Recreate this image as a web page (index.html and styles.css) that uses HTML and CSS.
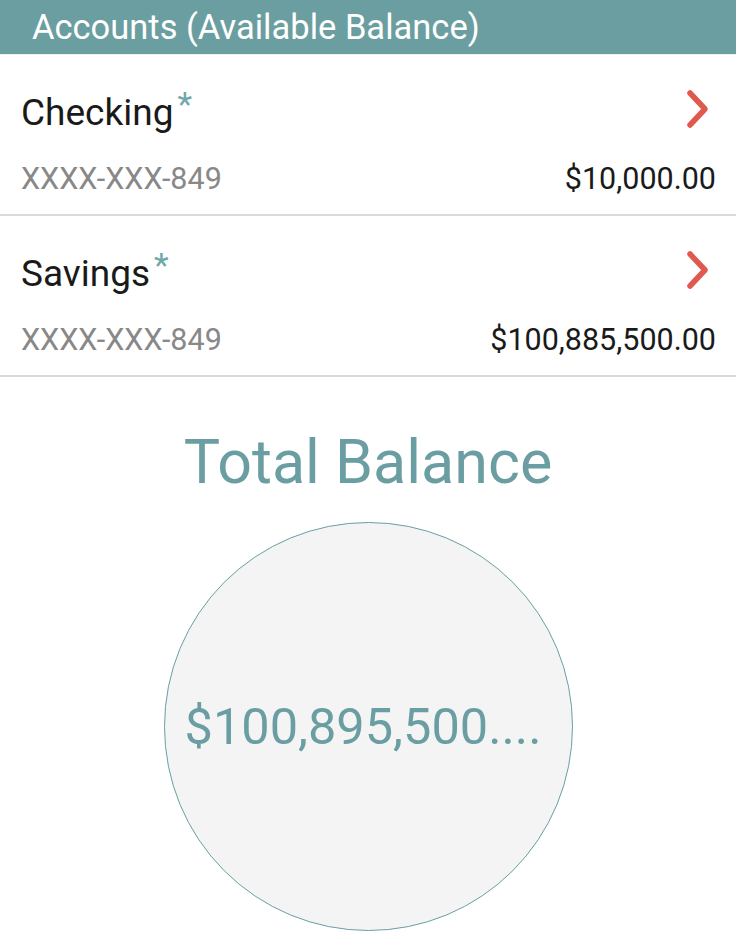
FILE: index.html
```html
<!doctype html>
<html>
    <head>
    <title>Accounts</title>
    <link rel="stylesheet" href="styles.css">
    </head>

    <body>
        <div id="accounts">
            <div class="bar-title">Accounts (Available Balance)</div>

            <div class="acct-row">
                <div class="acct-name">Checking<span class="star">*</span></div>
                <svg class="chevron" viewBox="0 0 24 40" width="24" height="40">
                    <path d="M4 4 L19 20 L4 36" fill="none" stroke="#e0594f" stroke-width="5.5" stroke-linecap="round" stroke-linejoin="round"/>
                </svg>
                <div class="acct-num">XXXX-XXX-849</div>
                <div class="acct-amt">$10,000.00</div>
            </div>

            <div class="acct-row">
                <div class="acct-name">Savings<span class="star">*</span></div>
                <svg class="chevron" viewBox="0 0 24 40" width="24" height="40">
                    <path d="M4 4 L19 20 L4 36" fill="none" stroke="#e0594f" stroke-width="5.5" stroke-linecap="round" stroke-linejoin="round"/>
                </svg>
                <div class="acct-num">XXXX-XXX-849</div>
                <div class="acct-amt">$100,885,500.00</div>
            </div>

            <div class="total-box">
                <div class="total-title">Total Balance</div>
                <div class="total-circle">
                    <span class="total-amt">$100,895,500....</span>
                </div>
            </div>
        </div>
    </body>
</html>
```

FILE: styles.css
```css
body {
    margin: 0;
    background: #ffffff;
    font-family: Roboto, "Noto Sans", sans-serif;
    overflow: hidden;
}

#accounts {
    width: 736px;
}

.bar-title {
    height: 55px;
    line-height: 54px;
    padding-left: 32px;
    background: #6a9ea0;
    color: #ffffff;
    font-size: 34.5px;
    border-bottom: 1px solid #e6f2f2;
    box-sizing: border-box;
}

.acct-row {
    display: grid;
    grid-template-columns: 1fr auto;
    height: 161px;
    padding: 36px 20px 0 21px;
    box-sizing: border-box;
    border-bottom: 2px solid #dadada;
}

.acct-name {
    font-size: 37px;
    line-height: 44px;
    color: #1a1a1a;
}

.star {
    position: relative;
    top: -9px;
    color: #6fa8a8;
    font-size: 34px;
    line-height: 0;
    margin-left: 4px;
}

.chevron {
    align-self: start;
    margin-top: -2px;
    margin-right: 6px;
    justify-self: end;
}

.acct-num {
    font-size: 30.5px;
    line-height: 40px;
    margin-top: 8px;
    color: #888888;
}

.acct-amt {
    font-size: 30.5px;
    line-height: 40px;
    margin-top: 8px;
    color: #1a1a1a;
    text-align: right;
}

.total-box {
    display: flex;
    flex-direction: column;
    align-items: center;
}

.total-title {
    margin-top: 50px;
    font-size: 61px;
    line-height: 70px;
    color: #6a9ea2;
}

.total-circle {
    margin-top: 25px;
    width: 409px;
    height: 409px;
    border-radius: 50%;
    border: 1.5px solid #6a9ea2;
    background: #f4f4f5;
    box-sizing: border-box;
    display: flex;
    align-items: center;
    justify-content: center;
}

.total-amt {
    font-size: 50.5px;
    margin-right: 10px;
    color: #6a9ea2;
}
```
